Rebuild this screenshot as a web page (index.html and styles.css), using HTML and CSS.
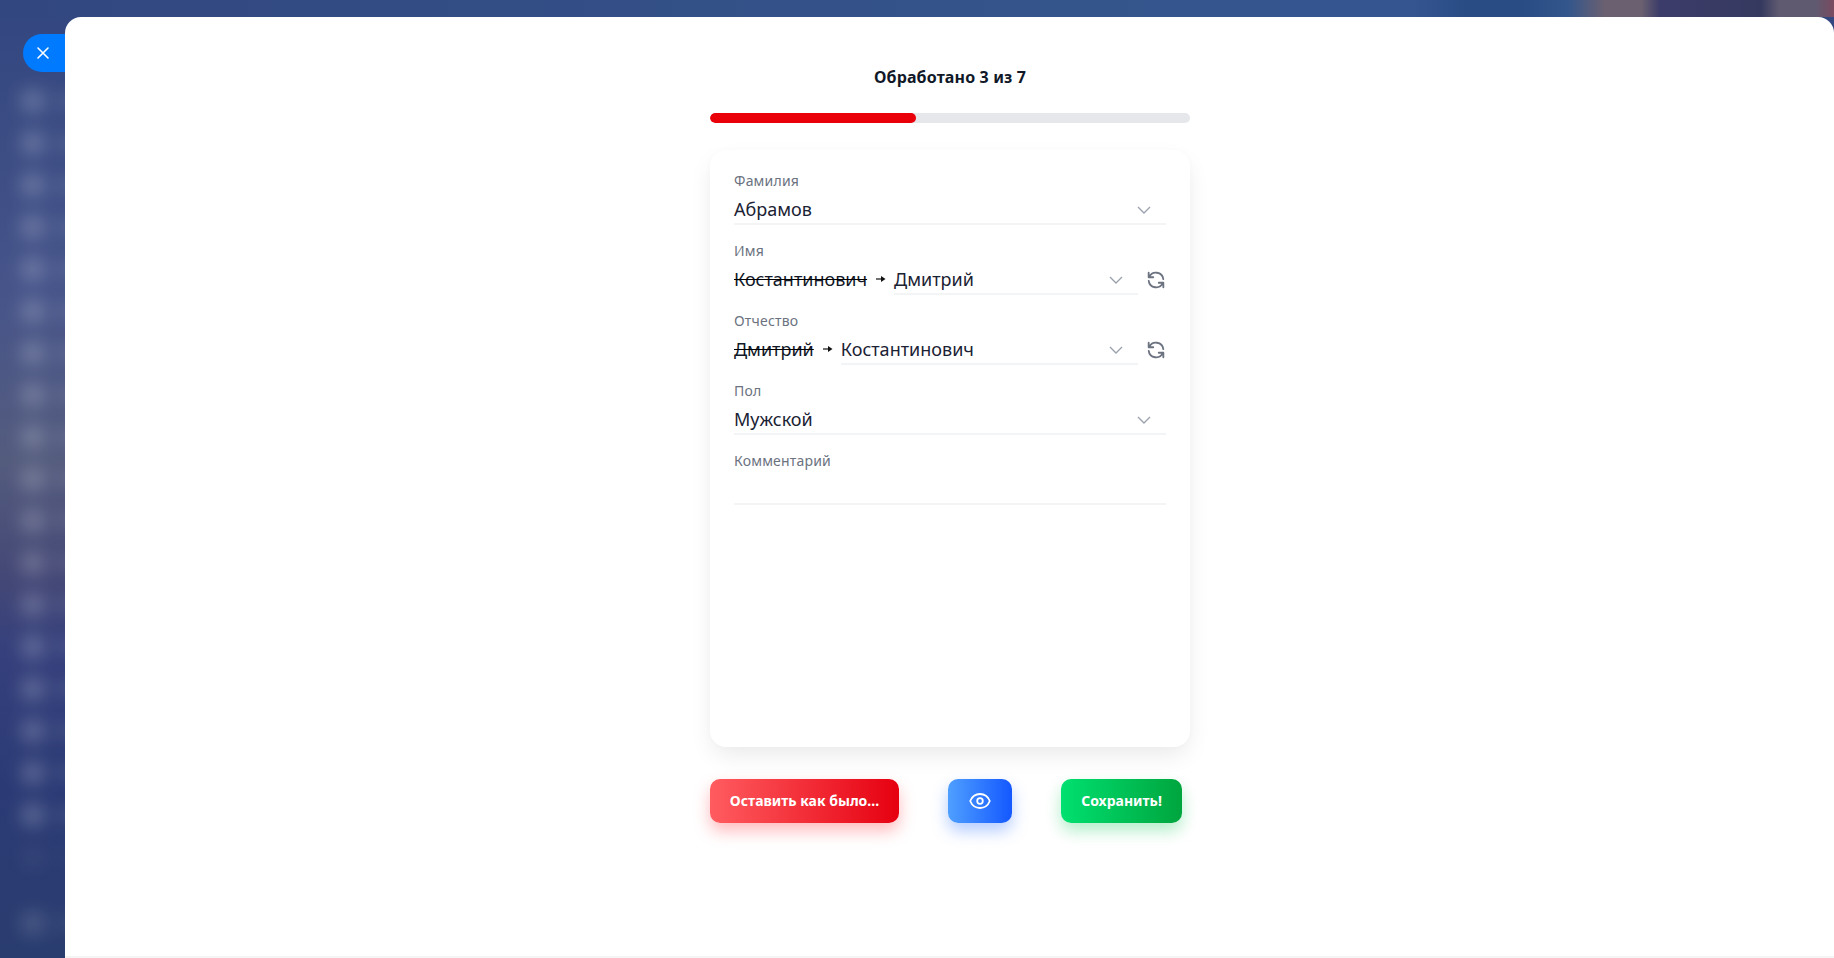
FILE: index.html
```html
<!DOCTYPE html>
<html lang="en">
<head>
    <meta charset="UTF-8">
    <meta name="viewport" content="width=device-width, initial-scale=1.0">
    <title>Обработка</title>
    <link rel="stylesheet" href="styles.css">
</head>
<body>
    <!-- blurred page behind the modal -->
    <div class="backdrop">
        <div class="backdrop-strip"></div>
        <div class="backdrop-menu">
            <p><i></i><b></b></p><p><i></i><b></b></p><p><i></i><b></b></p><p><i></i><b></b></p>
            <p><i></i><b></b></p><p><i></i><b></b></p><p><i></i><b></b></p><p><i></i><b></b></p>
            <p><i></i><b></b></p><p><i></i><b></b></p><p><i></i><b></b></p><p><i></i><b></b></p>
            <p><i></i><b></b></p><p><i></i><b></b></p><p><i></i><b></b></p><p><i></i><b></b></p>
            <p><i></i><b></b></p><p><i></i><b></b></p><p class="dim"><i></i><b></b></p>
            <p class="last"><i></i><b></b></p>
        </div>
    </div>

    <button class="close-tab" type="button" aria-label="Закрыть">
        <svg width="14" height="14" viewBox="0 0 14 14"><path d="M2 2l10 10M12 2L2 12" stroke="#fff" stroke-width="1.6" stroke-linecap="round"/></svg>
    </button>

    <div class="panel">
        <div class="column">
            <h1 class="title">Обработано 3 из 7</h1>
            <div class="progress"><div class="progress-fill" style="width: 42.86%"></div></div>

            <form class="card">
                <div class="field">
                    <label>Фамилия</label>
                    <div class="row">
                        <div class="select">
                            <span>Абрамов</span>
                            <svg class="chevron" width="14" height="8" viewBox="0 0 14 8"><path d="M1 1l6 6 6-6" fill="none" stroke="#9ca3af" stroke-width="1.4"/></svg>
                        </div>
                    </div>
                </div>
                <div class="field">
                    <label>Имя</label>
                    <div class="row">
                        <s class="old">Костантинович</s>
                        <svg class="arrow" width="10" height="8" viewBox="0 0 10 8"><path d="M0 4h6" stroke="#111" stroke-width="1.2"/><path d="M5 1l4.500 3L5 7z" fill="#111"/></svg>
                        <div class="select">
                            <span>Дмитрий</span>
                            <svg class="chevron" width="14" height="8" viewBox="0 0 14 8"><path d="M1 1l6 6 6-6" fill="none" stroke="#9ca3af" stroke-width="1.4"/></svg>
                        </div>
                        <svg class="refresh" width="22" height="22" viewBox="0 0 24 24" fill="none" stroke="#6b7280" stroke-width="2" stroke-linecap="round" stroke-linejoin="round"><path d="M4 4v5h.582m15.356 2A8.001 8.001 0 0 0 4.582 9m0 0H9m11 11v-5h-.581m0 0a8.003 8.003 0 0 1-15.357-2m15.357 2H15"/></svg>
                    </div>
                </div>
                <div class="field">
                    <label>Отчество</label>
                    <div class="row">
                        <s class="old">Дмитрий</s>
                        <svg class="arrow" width="10" height="8" viewBox="0 0 10 8"><path d="M0 4h6" stroke="#111" stroke-width="1.2"/><path d="M5 1l4.500 3L5 7z" fill="#111"/></svg>
                        <div class="select">
                            <span>Костантинович</span>
                            <svg class="chevron" width="14" height="8" viewBox="0 0 14 8"><path d="M1 1l6 6 6-6" fill="none" stroke="#9ca3af" stroke-width="1.4"/></svg>
                        </div>
                        <svg class="refresh" width="22" height="22" viewBox="0 0 24 24" fill="none" stroke="#6b7280" stroke-width="2" stroke-linecap="round" stroke-linejoin="round"><path d="M4 4v5h.582m15.356 2A8.001 8.001 0 0 0 4.582 9m0 0H9m11 11v-5h-.581m0 0a8.003 8.003 0 0 1-15.357-2m15.357 2H15"/></svg>
                    </div>
                </div>
                <div class="field">
                    <label>Пол</label>
                    <div class="row">
                        <div class="select">
                            <span>Мужской</span>
                            <svg class="chevron" width="14" height="8" viewBox="0 0 14 8"><path d="M1 1l6 6 6-6" fill="none" stroke="#9ca3af" stroke-width="1.4"/></svg>
                        </div>
                    </div>
                </div>
                <div class="field">
                    <label>Комментарий</label>
                    <div class="row">
                        <div class="select"><span>&nbsp;</span></div>
                    </div>
                </div>
            </form>

            <div class="actions">
                <button class="btn btn-red" type="button">Оставить как было...</button>
                <button class="btn btn-blue" type="button" aria-label="Просмотр">
                    <svg width="22" height="16" viewBox="0 0 22 16" fill="none" stroke="#fff" stroke-width="1.8"><path d="M1.200 8C3 3.700 6.700 1 11 1s8 2.700 9.800 7c-1.800 4.300-5.500 7-9.800 7S3 12.300 1.200 8z"/><circle cx="11" cy="8" r="2.800"/></svg>
                </button>
                <button class="btn btn-green" type="button">Сохранить!</button>
            </div>
        </div>
    </div>
</body>
</html>
```

FILE: styles.css
```css
* {
    box-sizing: border-box;
}
html, body {
    height: 100%;
}
body {
    margin: 0;
    overflow: hidden;
    position: relative;
    font-family: "Noto Sans", sans-serif;
    color: #111827;
    background: #2e3d76;
}

/* background */
.backdrop {
    position: absolute;
    inset: 0;
    overflow: hidden;
    background: linear-gradient(180deg, #32467f 0%, #46548a 30%, #545c7e 48%, #444876 60%, #35407c 68%, #2b3a75 82%, #2a3d6f 100%);
}
.backdrop-strip {
    height: 17px;
    background: linear-gradient(90deg, #32477f 0%, #34558c 60%, #345590 77%, #2a4c85 80%, #2a4c85 83%, #33568c 85.500%, #6a6070 87.500%, #6a6070 89.500%, #3c3c6a 90.500%, #35395f 96%, #5f5a70 97%, #5f5a70 99%, #7a4a60 100%);
}
.backdrop-menu {
    display: flex;
    flex-direction: column;
    gap: 20px;
    padding: 73px 0 0 22px;
    filter: blur(9px);
}
.backdrop-menu p {
    display: flex;
    align-items: center;
    gap: 14px;
    margin: 0;
    height: 22px;
}
.backdrop-menu i {
    width: 22px;
    height: 22px;
    border-radius: 6px;
    background: rgba(255, 255, 255, 0.24);
}
.backdrop-menu b {
    width: 40px;
    height: 12px;
    background: rgba(255, 255, 255, 0.16);
}
.backdrop-menu .dim {
    opacity: 0.25;
}
.backdrop-menu .last {
    margin-top: 24px;
    opacity: 0.7;
}

/* modal */
.close-tab {
    position: absolute;
    left: 23px;
    top: 34px;
    width: 60px;
    height: 38px;
    padding: 0 0 0 13px;
    display: flex;
    align-items: center;
    border: none;
    border-radius: 19px;
    background: #007aff;
}
.panel {
    position: absolute;
    left: 65px;
    top: 17px;
    right: 0;
    bottom: 0;
    background: #fff;
    border-radius: 16px 16px 0 0;
    border-bottom: 2px solid #f5f5f5;
    display: flex;
    justify-content: center;
}
.column {
    width: 480px;
    padding-top: 48px;
    margin-left: 1px;
}
.title {
    margin: 0 0 24px;
    font-size: 16px;
    line-height: 24px;
    font-weight: 700;
    letter-spacing: 0.14px;
    text-align: center;
}
.progress {
    height: 10px;
    border-radius: 5px;
    background: #e5e7eb;
    overflow: hidden;
}
.progress-fill {
    height: 100%;
    border-radius: 5px;
    background: #e90008;
}
.card {
    margin-top: 27px;
    height: 597px;
    padding: 21px 24px;
    background: #fff;
    border-radius: 16px;
    box-shadow: 0 10px 25px -3px rgba(0, 0, 0, 0.09), 0 0 8px rgba(0, 0, 0, 0.015);
}
.field {
    margin-bottom: 16px;
}
.field label {
    display: block;
    margin-bottom: 4px;
    font-size: 14px;
    line-height: 20px;
    letter-spacing: 0.2px;
    color: #6b7280;
}
.row {
    display: flex;
    align-items: flex-start;
}
.old {
    font-size: 18px;
    line-height: 28px;
    color: #111827;
    text-decoration-color: #000;
    white-space: nowrap;
}
.arrow {
    flex: none;
    margin: 10px 8px 0 9px;
}
.select {
    flex: 1;
    display: flex;
    align-items: flex-start;
    justify-content: space-between;
    padding-right: 15px;
    height: 30px;
    border-bottom: 2px solid #f3f4f6;
    font-size: 18px;
    line-height: 28px;
    color: #1a2233;
}
.chevron {
    margin-top: 11px;
}
.refresh {
    flex: none;
    margin: 4px -1px 0 7px;
}

/* buttons */
.actions {
    display: flex;
    gap: 49px;
    margin-top: 32px;
}
.btn {
    height: 44px;
    padding: 0 0 1px;
    display: flex;
    align-items: center;
    justify-content: center;
    border: none;
    border-radius: 10px;
    color: #fff;
    font-family: inherit;
    font-size: 14px;
    font-weight: 700;
    white-space: nowrap;
    cursor: pointer;
}
.btn-red {
    width: 189px;
    background: linear-gradient(90deg, #ff5c60, #e60010);
    box-shadow: 0 8px 16px rgba(255, 60, 70, 0.35);
}
.btn-blue {
    width: 64px;
    background: linear-gradient(90deg, #4f9fff, #1458ff);
    box-shadow: 0 8px 16px rgba(40, 110, 255, 0.35);
}
.btn-green {
    width: 121px;
    background: linear-gradient(90deg, #00e070, #00a53e);
    box-shadow: 0 8px 16px rgba(0, 200, 80, 0.3);
}
```
